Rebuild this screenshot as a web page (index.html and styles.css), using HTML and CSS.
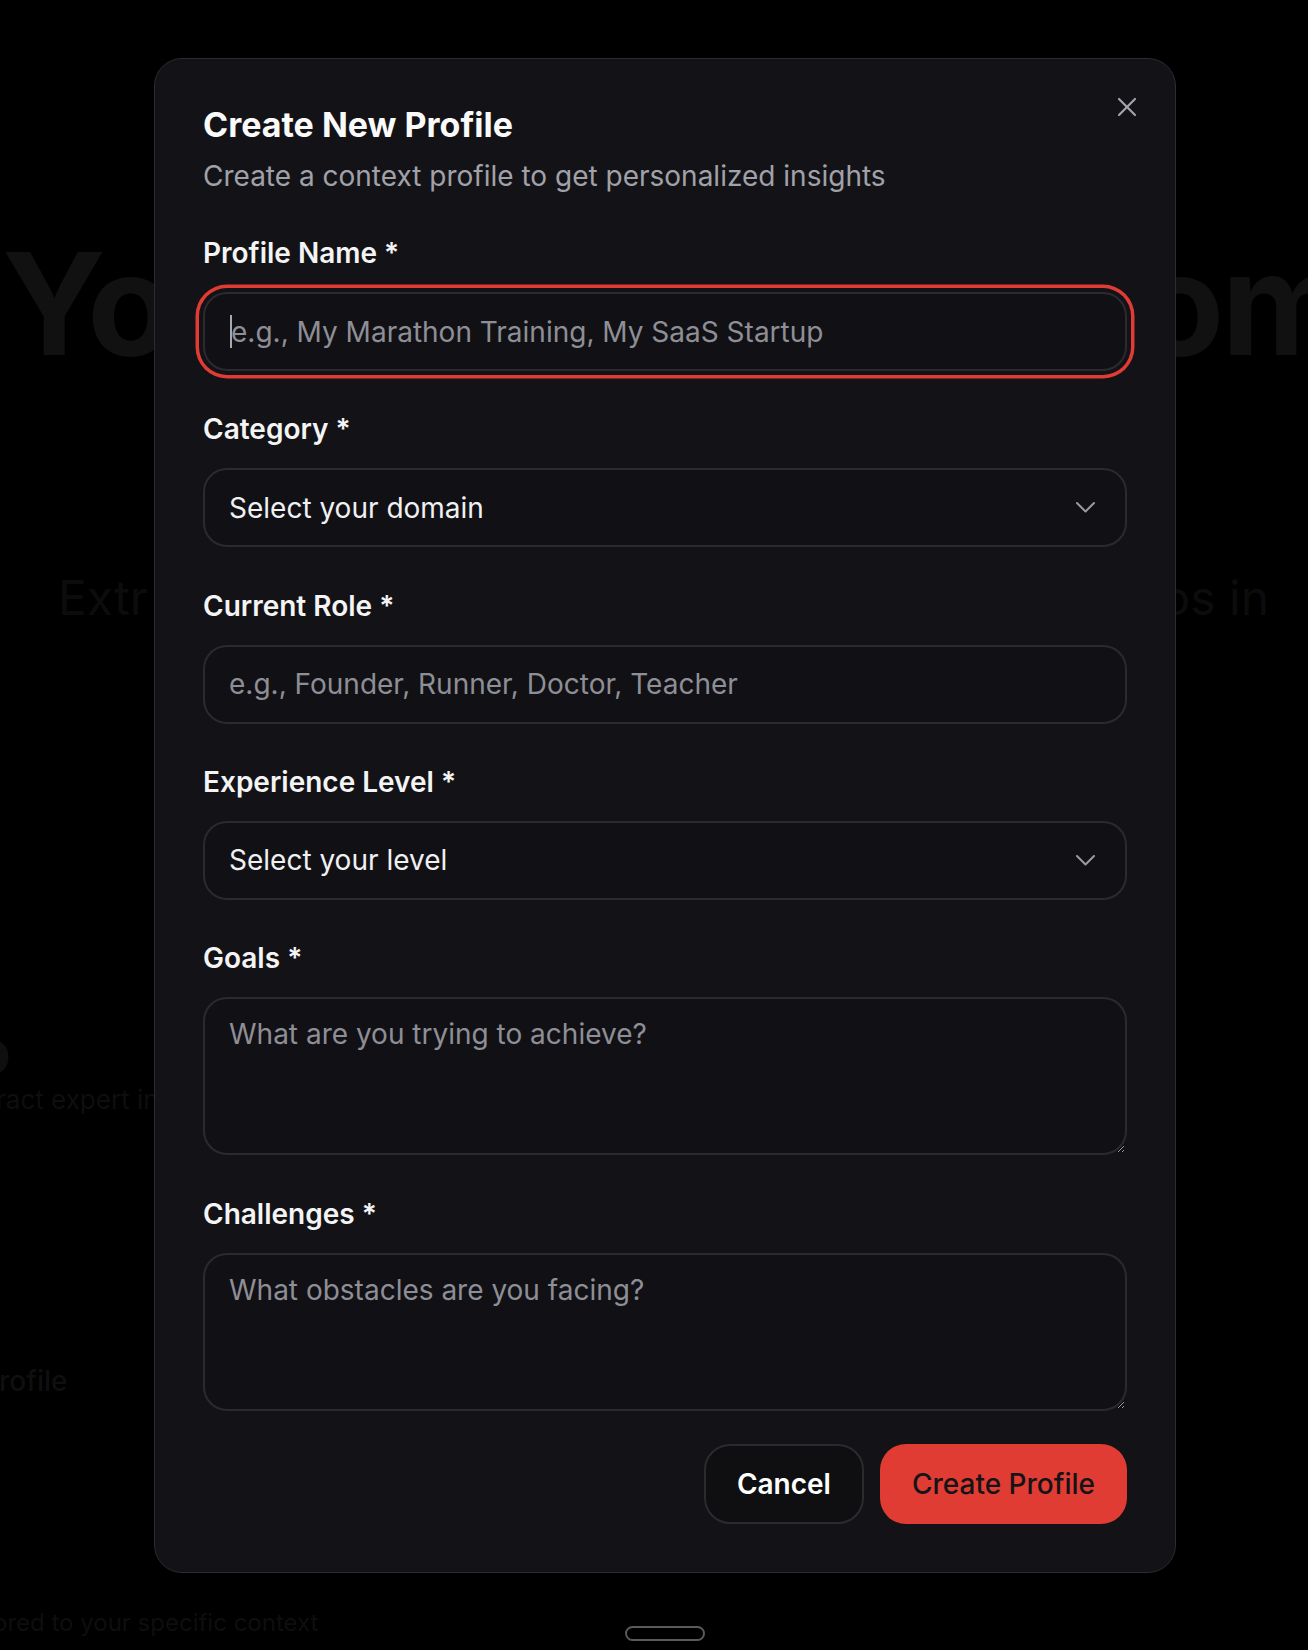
FILE: index.html
```html
<!DOCTYPE html>
<html lang="en">
<head>
<meta charset="utf-8">
<title>Create New Profile</title>
<link rel="stylesheet" href="styles.css">
</head>
<body>
<div class="page" aria-hidden="true">
  <div class="hero-title"><span class="ht-left">Yo</span><span class="ht-right">om</span></div>
  <div class="hero-sub"><span>Extr</span><span>os in</span></div>
  <div class="step">
    <div class="step-icon">o</div>
    <div class="step-text">ract expert insights</div>
  </div>
  <div class="cta">rofile</div>
  <div class="foot">ored to your specific context</div>
</div>

<div class="overlay">
  <div class="modal" role="dialog" aria-labelledby="modal-title">
    <button class="close" type="button" aria-label="Close">
      <svg width="32" height="32" viewBox="0 0 24 24" fill="none" stroke="currentColor" stroke-width="1.6" stroke-linecap="round" stroke-linejoin="round"><path d="M18 6 6 18"/><path d="m6 6 12 12"/></svg>
    </button>

    <header class="modal-head">
      <h2 class="modal-title" id="modal-title">Create New Profile</h2>
      <p class="modal-sub">Create a context profile to get personalized insights</p>
    </header>

    <div class="field">
      <label class="label" for="f-name">Profile Name *</label>
      <div class="control">
        <input class="input input-focused" id="f-name" type="text" placeholder="e.g., My Marathon Training, My SaaS Startup">
        <span class="caret"></span>
      </div>
    </div>

    <div class="field">
      <label class="label">Category *</label>
      <div class="select">
        <span>Select your domain</span>
        <svg class="chev" width="19" height="11" viewBox="0 0 19 11" fill="none" stroke="currentColor" stroke-width="2" stroke-linecap="round" stroke-linejoin="round"><polyline points="1,1 9.5,9.5 18,1"/></svg>
      </div>
    </div>

    <div class="field">
      <label class="label" for="f-role">Current Role *</label>
      <input class="input" id="f-role" type="text" placeholder="e.g., Founder, Runner, Doctor, Teacher">
    </div>

    <div class="field">
      <label class="label">Experience Level *</label>
      <div class="select">
        <span>Select your level</span>
        <svg class="chev" width="19" height="11" viewBox="0 0 19 11" fill="none" stroke="currentColor" stroke-width="2" stroke-linecap="round" stroke-linejoin="round"><polyline points="1,1 9.5,9.5 18,1"/></svg>
      </div>
    </div>

    <div class="field">
      <label class="label" for="f-goals">Goals *</label>
      <textarea class="textarea" id="f-goals" placeholder="What are you trying to achieve?"></textarea>
    </div>

    <div class="field">
      <label class="label" for="f-chal">Challenges *</label>
      <textarea class="textarea" id="f-chal" placeholder="What obstacles are you facing?"></textarea>
    </div>

    <div class="actions">
      <button class="btn btn-cancel" type="button">Cancel</button>
      <button class="btn btn-primary" type="button">Create Profile</button>
    </div>
  </div>
  <div class="handle"></div>
</div>
</body>
</html>
```

FILE: styles.css
```css
* { box-sizing: border-box; }

html, body {
  margin: 0;
  width: 100%;
  height: 100%;
}

body {
  background: #000;
  font-family: Inter, "Noto Sans", "Liberation Sans", sans-serif;
  overflow: hidden;
  position: relative;
}

/* ---------- page behind the dialog ---------- */
.page {
  padding-top: 228px;
  white-space: nowrap;
  overflow: hidden;
}

.hero-title {
  display: flex;
  justify-content: space-between;
  font-weight: 700;
  font-size: 142px;
  line-height: 150px;
  color: #111112;
  letter-spacing: -3px;
}
.ht-left { margin-left: 2px; }
.ht-right { margin-right: -40px; }

.hero-sub {
  display: flex;
  justify-content: space-between;
  margin-top: 190px;
  padding: 0 39px 0 58px;
  font-size: 48px;
  line-height: 60px;
  color: #0c0c0d;
}

.step { margin-top: 393px; }
.step-icon {
  margin-left: -26px;
  font-weight: 700;
  font-size: 60px;
  line-height: 60px;
  color: #0f0f10;
}
.step-text {
  margin-top: 1px;
  margin-left: -4px;
  font-size: 26px;
  line-height: 36px;
  color: #0e0e0f;
}

.cta {
  margin-top: 245px;
  margin-left: -1px;
  font-size: 28px;
  line-height: 36px;
  font-weight: 500;
  color: #0f0f10;
}

.foot {
  margin-top: 206px;
  margin-left: -7px;
  font-size: 24px;
  line-height: 36px;
  color: #0e0e0f;
}

/* ---------- overlay + dialog ---------- */
.overlay {
  position: fixed;
  inset: 0;
  padding: 58px 0 0 154px;
}

.modal {
  position: relative;
  width: 1022px;
  background: #131317;
  border: 1px solid #2b2b30;
  border-radius: 28px;
  padding: 50px 48px 48px;
  display: flex;
  flex-direction: column;
  gap: 40.2px;
}

.close {
  position: absolute;
  top: 32px;
  right: 32px;
  width: 32px;
  height: 32px;
  padding: 0;
  border: 0;
  background: transparent;
  color: #a3a3ab;
  display: flex;
}

.modal-title {
  margin: 0;
  font-size: 34px;
  line-height: 32px;
  font-weight: 700;
  color: #fafafa;
}

.modal-sub {
  margin: 17px 0 0;
  font-size: 28px;
  line-height: 37px;
  color: #a1a1a9;
}

.field { display: flex; flex-direction: column; }

.label {
  display: block;
  margin-bottom: 21px;
  font-size: 28px;
  line-height: 36px;
  font-weight: 600;
  color: #f4f4f5;
}

.control { position: relative; }

.input,
.select,
.textarea {
  width: 100%;
  border: 2px solid #2a2a2f;
  border-radius: 24px;
  background: #111115;
  font-family: inherit;
  font-size: 28px;
  color: #f0f0f2;
  outline: none;
  margin: 0;
}

.input {
  height: 79px;
  padding: 0 24px;
}

.input-focused {
  padding-left: 26px;
  box-shadow: 0 0 0 4px #131317, 0 0 0 7.5px #e03c33;
}

.caret {
  position: absolute;
  left: 27px;
  top: 23px;
  width: 2px;
  height: 33px;
  background: #a8a8ae;
}

.input::placeholder,
.textarea::placeholder {
  color: #8e8e96;
  opacity: 1;
}

.select {
  height: 79px;
  padding: 0 30px 0 24px;
  display: flex;
  align-items: center;
  justify-content: space-between;
}

.chev { color: #9a9aa1; flex: none; }

.textarea {
  display: block;
  height: 158.5px;
  padding: 15px 24px;
  line-height: 40px;
  resize: vertical;
  color-scheme: dark;
}

.actions {
  display: flex;
  justify-content: flex-end;
  gap: 16px;
  margin-top: -7px;
}

.btn {
  height: 80px;
  border-radius: 26px;
  font-family: inherit;
  font-size: 28px;
  margin: 0;
}

.btn-cancel {
  padding: 0 31px;
  border: 2px solid #2a2a2f;
  background: #0f0f12;
  color: #ffffff;
  font-weight: 600;
}

.btn-primary {
  padding: 0 32px;
  border: 0;
  background: #e03c33;
  color: #141416;
  font-weight: 500;
}

.handle {
  position: absolute;
  left: 625px;
  top: 1626px;
  width: 80px;
  height: 15px;
  border: 2px solid #5a5a5e;
  border-radius: 8px;
}
```
